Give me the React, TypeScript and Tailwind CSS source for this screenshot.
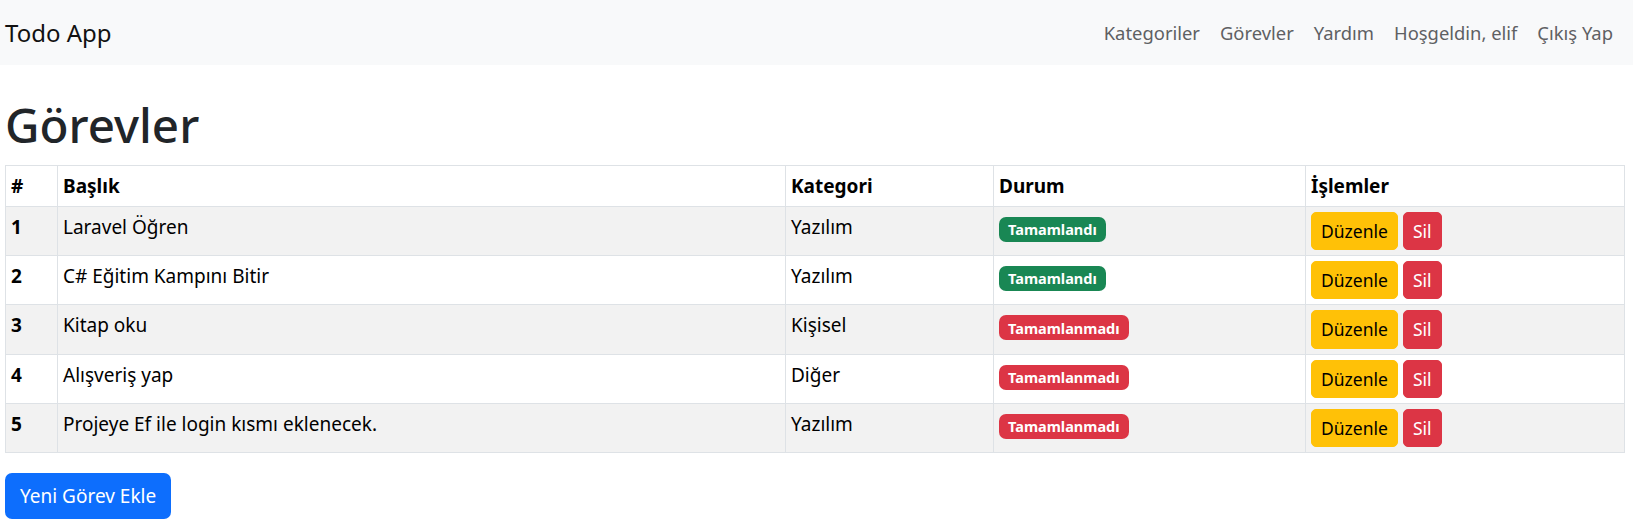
import React from "react";

type Task = { id: number; title: string; category: string; done: boolean };

const tasks: Task[] = [
  { id: 1, title: "Laravel Öğren", category: "Yazılım", done: true },
  { id: 2, title: "C# Eğitim Kampını Bitir", category: "Yazılım", done: true },
  { id: 3, title: "Kitap oku", category: "Kişisel", done: false },
  { id: 4, title: "Alışveriş yap", category: "Diğer", done: false },
  { id: 5, title: "Projeye Ef ile login kısmı eklenecek.", category: "Yazılım", done: false },
];

export default function App() {
  return (
    <div
      className="min-h-screen bg-white text-black"
      style={{ fontFamily: '"Noto Sans", "Open Sans", sans-serif' }}
    >
      <nav className="h-[65px] bg-[#f8f9fa] flex items-center justify-between pl-[5px] pr-[10px]">
        <a className="text-[24px] leading-[36px] text-[#111]">Todo App</a>
        <ul className="flex items-center">
          {["Kategoriler", "Görevler", "Yardım", "Hoşgeldin, elif", "Çıkış Yap"].map((l) => (
            <li key={l}>
              <a className="block px-[10px] text-[18.4px] leading-[30px] text-[#5e6063]">{l}</a>
            </li>
          ))}
        </ul>
      </nav>
      <main className="px-[5px]">
        <h1 className="mt-[30px] mb-[10px] text-[47.5px] leading-[60px] font-medium text-[#212529]">
          Görevler
        </h1>
        <table className="table-fixed border-collapse w-[1619px] text-[19px] leading-[30px]">
          <colgroup>
            <col className="w-[52px]" />
            <col className="w-[728px]" />
            <col className="w-[208px]" />
            <col className="w-[312px]" />
            <col className="w-[319px]" />
          </colgroup>
          <thead>
            <tr>
              {["#", "Başlık", "Kategori", "Durum", "İşlemler"].map((h) => (
                <th
                  key={h}
                  className="border border-[#dee2e6] px-[5px] py-[5px] text-left align-top font-bold text-black"
                >
                  {h}
                </th>
              ))}
            </tr>
          </thead>
          <tbody>
            {tasks.map((t, i) => (
              <tr key={t.id} className={i % 2 === 0 ? "bg-[#f2f2f2]" : "bg-white"}>
                <td className="border border-[#dee2e6] px-[5px] py-[5px] align-top font-bold">{t.id}</td>
                <td className="border border-[#dee2e6] px-[5px] py-[5px] align-top">{t.title}</td>
                <td className="border border-[#dee2e6] px-[5px] py-[5px] align-top">{t.category}</td>
                <td className="border border-[#dee2e6] px-[5px] py-[5px] align-top">
                  <span
                    className={
                      "mt-[5px] inline-flex h-[25px] items-center rounded-[7px] px-[9px] text-[14.5px] font-bold leading-none text-white align-top " +
                      (t.done ? "bg-[#198754]" : "bg-[#dc3545]")
                    }
                  >
                    {t.done ? "Tamamlandı" : "Tamamlanmadı"}
                  </span>
                </td>
                <td className="border border-[#dee2e6] px-[5px] py-[5px] align-top">
                  <div className="flex gap-[5px]">
                    <button className="h-[38.2px] rounded-[5px] border border-[#ffc107] bg-[#ffc107] px-[9px] text-[17.5px] leading-[26px] text-black">
                      Düzenle
                    </button>
                    <button className="h-[38.2px] rounded-[5px] border border-[#dc3545] bg-[#dc3545] px-[9px] text-[17.5px] leading-[26px] text-white">
                      Sil
                    </button>
                  </div>
                </td>
              </tr>
            ))}
          </tbody>
        </table>
        <button className="mt-[20px] h-[46px] rounded-[7px] bg-[#0d6efd] px-[15px] text-[19px] leading-[30px] text-white">
          Yeni Görev Ekle
        </button>
      </main>
    </div>
  );
}
